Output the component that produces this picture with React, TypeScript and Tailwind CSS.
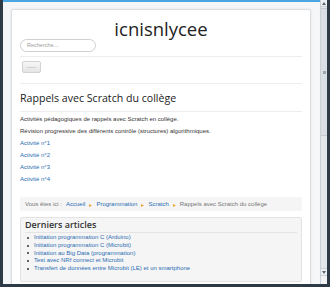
import React from 'react';

const sans = { fontFamily: '"Liberation Sans", Arial, sans-serif' };
const open = { fontFamily: '"Open Sans", "Liberation Sans", sans-serif' };

const activites = ['Activité n°1', 'Activité n°2', 'Activité n°3', 'Activité n°4'];

const articles = [
  'Initiation programmation C (Arduino)',
  'Initiation programmation C (Microbit)',
  'Initiation au Big Data (programmation)',
  'Test avec NRf connect et Microbit',
  'Transfert de données entre Microbit (LE) et un smartphone',
];

function Sep() {
  return (
    <span className="mx-[4px] inline-flex items-end pt-[2px]">
      <svg width="3" height="3" viewBox="0 0 3 3">
        <path d="M0 0 L3 1.5 L0 3 Z" fill="#f0a33a" />
      </svg>
    </span>
  );
}

function Scrollbar() {
  return (
    <div className="w-[7px] flex flex-col bg-[#e2e7eb] border-l border-[#c9d0d6]">
      <div className="h-[7px] flex items-center justify-center bg-[#eef1f3] border-b border-[#c9d0d6]">
        <svg width="4" height="3" viewBox="0 0 4 3">
          <path d="M0 3 L2 0 L4 3 Z" fill="#5a6570" />
        </svg>
      </div>
      <div className="mt-[1px] h-[128px] bg-[#d9dfe4] border-y border-[#c3cbd2] flex items-center justify-center">
        <div className="w-[3px] h-[3px] bg-[#9aa6b0]" />
      </div>
      <div className="flex-1" />
      <div className="h-[8px] flex items-center justify-center bg-[#eef1f3] border-y border-[#c9d0d6]">
        <svg width="4" height="3" viewBox="0 0 4 3">
          <path d="M0 0 L2 3 L4 0 Z" fill="#5a6570" />
        </svg>
      </div>
      <div className="h-[8px] bg-[#f1f3f5]" />
    </div>
  );
}

export default function App() {
  return (
    <div className="w-[330px] h-[287px] overflow-hidden flex flex-col bg-[#2e3a45]">
      <div className="flex h-[284px]">
        <div className="w-[3px] bg-[#2e3a45]" />
        <div className="w-[317px] flex flex-col bg-[#f4f6f7] overflow-hidden">
          <div className="h-[2px] bg-[#4aa6e2] shrink-0" />
          <div className="mt-[7px] ml-[8px] w-[300px] shrink-0 bg-white border border-[#dcdfe1] rounded-[2px] shadow-[0_0_3px_rgba(0,0,0,0.08)] px-[8px] pt-[9px] pb-[10px] text-[#333]">
            <div className="text-center text-[18.5px] leading-[20px] text-[#222]" style={open}>
              icnisnlycee
            </div>
            <div
              className="h-[13px] w-[76px] rounded-full border border-[#cfcfcf] flex items-center pl-[6px] text-[5.5px] text-[#9a9a9a]"
              style={sans}
            >
              Recherche...
            </div>
            <div className="mt-[4px] border-t border-[#eeeeee]" />
            <div className="mt-[4px] ml-[2px] w-[19px] h-[12px] rounded-[2px] border border-[#d2d2d2] bg-gradient-to-b from-[#f7f7f7] to-[#e4e4e4] flex items-center justify-center">
              <div className="w-[9px] h-[1px] bg-[#d0d0d0]" />
            </div>
            <div className="mt-[10px] border-t border-[#eeeeee]" />
            <h2 className="mt-[7px] text-[10.6px] leading-[14px] text-[#222]" style={open}>
              Rappels avec Scratch du collège
            </h2>
            <div className="mt-[6px] border-t border-[#eeeeee]" />
            <div className="mt-[2.5px] text-[6px] leading-[8px] flex flex-col gap-[4px]" style={sans}>
              <p>Activités pédagogiques de rappels avec Scratch en collège.</p>
              <p>Révision progressive des différents contrôle (structures) algorithmiques.</p>
              {activites.map((a) => (
                <p key={a} className="text-[#2a6db3]">
                  {a}
                </p>
              ))}
            </div>
            <div
              className="mt-[14.5px] h-[14px] rounded-[2px] bg-[#f5f5f5] flex items-center pl-[5px] text-[6px] text-[#777]"
              style={sans}
            >
              <span className="mr-[4px]">Vous êtes ici :</span>
              <span className="text-[#2a6db3]">Accueil</span>
              <Sep />
              <span className="text-[#2a6db3]">Programmation</span>
              <Sep />
              <span className="text-[#2a6db3]">Scratch</span>
              <Sep />
              <span>Rappels avec Scratch du collège</span>
            </div>
            <div className="mt-[6px] h-[65px] rounded-[2px] border border-[#e3e3e3] bg-[#f5f5f5] px-[4px] pt-[1px]">
              <h3 className="text-[9px] leading-[12px] font-semibold text-[#333]" style={open}>
                Derniers articles
              </h3>
              <div className="mt-[1px] border-t border-[#e4e4e4]" />
              <ul className="mt-[1px] text-[6px] leading-[7.8px]" style={sans}>
                {articles.map((a) => (
                  <li key={a} className="flex items-center ml-[2px]">
                    <span className="w-[2px] h-[2px] rounded-full bg-[#333] mr-[5px]" />
                    <span className="text-[#2a6db3]">{a}</span>
                  </li>
                ))}
              </ul>
            </div>
          </div>
        </div>
        <Scrollbar />
        <div className="w-[3px] bg-[#2e3a45]" />
      </div>
      <div className="h-[3px] bg-[#2e3a45]" />
    </div>
  );
}
